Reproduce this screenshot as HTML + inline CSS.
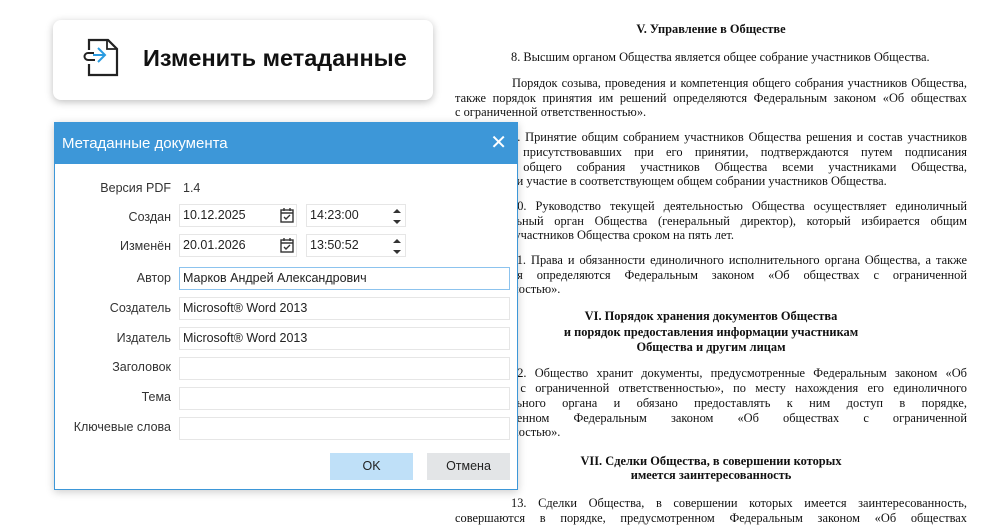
<!DOCTYPE html>
<html><head><meta charset="utf-8"><style>
*{margin:0;padding:0;box-sizing:border-box}
body{width:1000px;height:516px;overflow:hidden;background:#fff;position:relative;font-family:"Liberation Sans",sans-serif}
.doc{position:absolute;font-family:"Liberation Serif",serif;font-size:12.4px;color:#111;white-space:nowrap}
.j{position:absolute;left:455px;width:512px;text-align:justify;text-align-last:justify;white-space:normal;height:15px;overflow:hidden}
.c{position:absolute;left:455px;width:512px;text-align:center;font-weight:bold}
.l{position:absolute;left:455px}
.card{position:absolute;left:53px;top:20px;width:380px;height:80px;background:#fff;border-radius:8px;box-shadow:0 2px 8px rgba(0,0,0,.25)}
.card .t{position:absolute;left:90px;top:25px;font-size:23.5px;font-weight:bold;color:#111}
.dlg{position:absolute;left:54px;top:122px;width:464px;height:368px;background:#fff;border:1.5px solid #3d97d8;box-shadow:0 2px 8px rgba(0,0,0,.2)}
.tb{position:absolute;left:0;top:0;right:0;height:41px;background:#3d97d8;color:#fff;font-size:15px;line-height:41px;padding-left:7px}
.x{position:absolute;right:10px;top:0;font-size:20px;color:#fff}
.lab{position:absolute;right:346px;font-size:12.5px;color:#333;text-align:right;white-space:nowrap}
.in{position:absolute;height:23px;border:1px solid #e6e6e6;font-size:12.5px;color:#222;padding-left:3px;line-height:21px}
.btn{position:absolute;top:330px;width:83px;height:27px;font-size:12.5px;text-align:center;line-height:27px;color:#222}
</style></head><body>
<div class="doc">
<div class="c" style="top:22px">V. Управление в Обществе</div>
<div class="l" style="top:50px;left:511px">8. Высшим органом Общества является общее собрание участников Общества.</div>
<div class="j" style="top:76px;left:512px;width:455px">Порядок созыва, проведения и компетенция общего собрания участников Общества, а</div>
<div class="j" style="top:91px">также порядок принятия им решений определяются Федеральным законом «Об обществах</div>
<div class="l" style="top:105px">с ограниченной ответственностью».</div>
<div class="j" style="top:130px;left:511px;width:456px">9. Принятие общим собранием участников Общества решения и состав участников</div>
<div class="j" style="top:145px">Общества, присутствовавших при его принятии, подтверждаются путем подписания</div>
<div class="j" style="top:160px">протокола общего собрания участников Общества всеми участниками Общества,</div>
<div class="l" style="top:174px">принявшими участие в соответствующем общем собрании участников Общества.</div>
<div class="j" style="top:199px;left:511px;width:456px">10. Руководство текущей деятельностью Общества осуществляет единоличный</div>
<div class="j" style="top:214px">исполнительный орган Общества (генеральный директор), который избирается общим</div>
<div class="l" style="top:228px">собранием участников Общества сроком на пять лет.</div>
<div class="j" style="top:253px;left:511px;width:456px">11. Права и обязанности единоличного исполнительного органа Общества, а также его</div>
<div class="j" style="top:268px">компетенция определяются Федеральным законом «Об обществах с ограниченной</div>
<div class="l" style="top:282px">ответственностью».</div>
<div class="c" style="top:309px">VI. Порядок хранения документов Общества</div>
<div class="c" style="top:325px">и порядок предоставления информации участникам</div>
<div class="c" style="top:340px">Общества и другим лицам</div>
<div class="j" style="top:366px;left:511px;width:456px">12. Общество хранит документы, предусмотренные Федеральным законом «Об</div>
<div class="j" style="top:381px">обществах с ограниченной ответственностью», по месту нахождения его единоличного</div>
<div class="j" style="top:396px">исполнительного органа и обязано предоставлять к ним доступ в порядке,</div>
<div class="j" style="top:411px">предусмотренном Федеральным законом «Об обществах с ограниченной</div>
<div class="l" style="top:425px">ответственностью».</div>
<div class="c" style="top:454px">VII. Сделки Общества, в совершении которых</div>
<div class="c" style="top:468px">имеется заинтересованность</div>
<div class="j" style="top:496px;left:511px;width:456px">13. Сделки Общества, в совершении которых имеется заинтересованность,</div>
<div class="j" style="top:511px">совершаются в порядке, предусмотренном Федеральным законом «Об обществах</div>
</div>

<div class="card">
<svg style="position:absolute;left:30px;top:18px" width="40" height="42" viewBox="0 0 40 42">
<path d="M6 12 V2 H25 L34 11 V37 H6 V26" fill="none" stroke="#222" stroke-width="2.2"/>
<path d="M24 2 V11 H34" fill="none" stroke="#222" stroke-width="1.8"/>
<path d="M15 10 L22 17 L15 24 M22 17 H10" fill="none" stroke="#2a9be0" stroke-width="2"/>
<path d="M11 15 H5 a3.5 3.5 0 0 0 0 7 H12" fill="none" stroke="#222" stroke-width="2"/>
</svg>
<div class="t">Изменить метаданные</div>
</div>

<div class="dlg">
<div class="tb">Метаданные документа<span class="x">✕</span></div>
<div class="lab" style="top:58px">Версия PDF</div>
<div style="position:absolute;left:128px;top:58px;font-size:12.5px;color:#333">1.4</div>
<div class="lab" style="top:87px">Создан</div>
<div class="in" style="left:124px;top:81px;width:118px">10.12.2025</div>
<div class="in" style="left:251px;top:81px;width:100px">14:23:00</div>
<div class="lab" style="top:116px">Изменён</div>
<div class="in" style="left:124px;top:111px;width:118px">20.01.2026</div>
<div class="in" style="left:251px;top:111px;width:100px">13:50:52</div>
<svg style="position:absolute;left:224px;top:84px" width="16" height="50" viewBox="0 0 16 50">
<g fill="none" stroke="#333" stroke-width="1.4"><rect x="2" y="3" width="12" height="12"/><path d="M2 6H14M5 1V4M11 1V4M5 10L7 12L11 8"/>
<rect x="2" y="33" width="12" height="12"/><path d="M2 36H14M5 31V34M11 31V34M5 40L7 42L11 38"/></g></svg>
<svg style="position:absolute;left:337px;top:85px" width="10" height="50" viewBox="0 0 10 50">
<g fill="#333"><path d="M1 5L5 1L9 5Z M1 12L5 16L9 12Z M1 35L5 31L9 35Z M1 42L5 46L9 42Z"/></g></svg>
<div class="lab" style="top:148px">Автор</div>
<div class="in" style="left:124px;top:144px;width:331px;border-color:#8cc3ee">Марков Андрей Александрович</div>
<div class="lab" style="top:178px">Создатель</div>
<div class="in" style="left:124px;top:174px;width:331px">Microsoft® Word 2013</div>
<div class="lab" style="top:208px">Издатель</div>
<div class="in" style="left:124px;top:204px;width:331px">Microsoft® Word 2013</div>
<div class="lab" style="top:237px">Заголовок</div>
<div class="in" style="left:124px;top:234px;width:331px"></div>
<div class="lab" style="top:267px">Тема</div>
<div class="in" style="left:124px;top:264px;width:331px"></div>
<div class="lab" style="top:297px">Ключевые слова</div>
<div class="in" style="left:124px;top:294px;width:331px"></div>
<div class="btn" style="left:275px;background:#bfe0f8">OK</div>
<div class="btn" style="left:372px;background:#e3e5e7">Отмена</div>
</div>
</body></html>
